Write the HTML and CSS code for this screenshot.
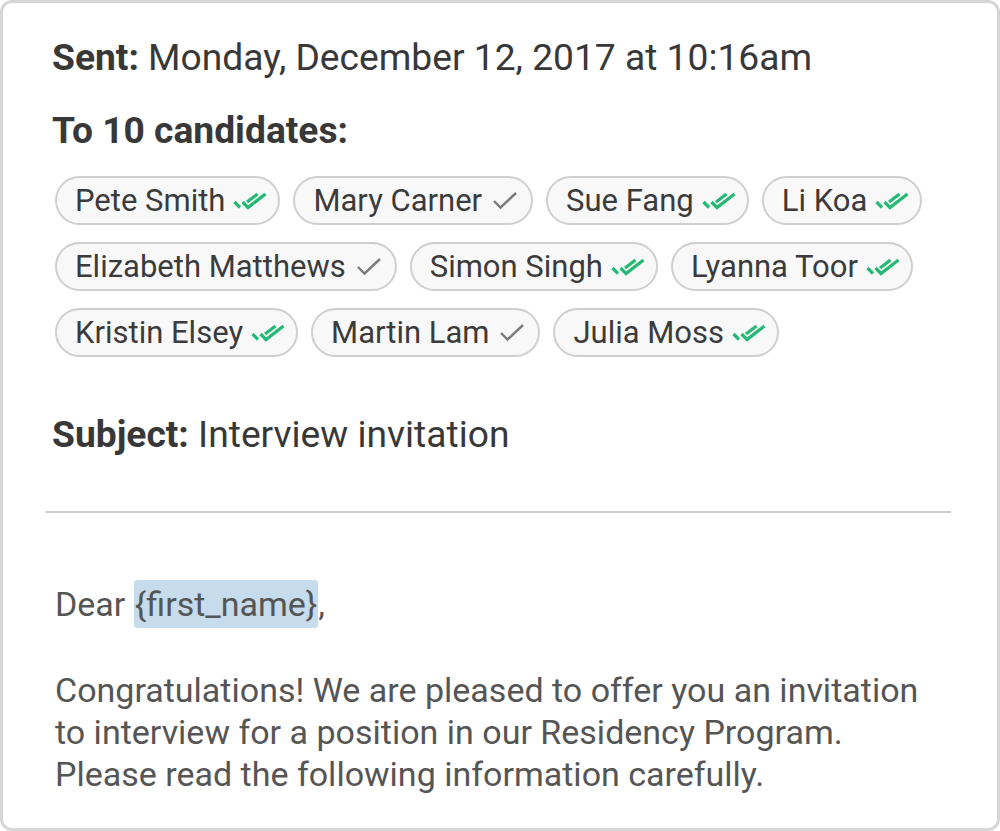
FILE: index.html
```html
<!DOCTYPE html>
<html lang="en">

<head>
    <meta charset="UTF-8">
    <meta name="viewport" content="width=device-width, initial-scale=1.0">
    <title>Interview invitation</title>
    <link rel="stylesheet" href="styles.css">
</head>

<body>

    <div class="card">
        <div class="header">
            <p class="sent"><b>Sent:</b> Monday, December 12, 2017 at 10:16am</p>

            <p class="to"><b>To 10 candidates:</b></p>

            <!-- danh sách người nhận -->
            <div class="chips">
                <span class="chip">Pete Smith <svg class="read" viewBox="0 0 34 18"><path d="M1.5 10l5.5 5.5M9.5 10l5.5 5.5L32.5 2M14 10.1L24.5 2"/></svg></span>
                <span class="chip">Mary Carner <svg class="sent-ok" viewBox="0 0 26 20"><path d="M2 10l6.5 6.5L24 2"/></svg></span>
                <span class="chip">Sue Fang <svg class="read" viewBox="0 0 34 18"><path d="M1.5 10l5.5 5.5M9.5 10l5.5 5.5L32.5 2M14 10.1L24.5 2"/></svg></span>
                <span class="chip">Li Koa <svg class="read" viewBox="0 0 34 18"><path d="M1.5 10l5.5 5.5M9.5 10l5.5 5.5L32.5 2M14 10.1L24.5 2"/></svg></span>
                <span class="chip">Elizabeth Matthews <svg class="sent-ok" viewBox="0 0 26 20"><path d="M2 10l6.5 6.5L24 2"/></svg></span>
                <span class="chip">Simon Singh <svg class="read" viewBox="0 0 34 18"><path d="M1.5 10l5.5 5.5M9.5 10l5.5 5.5L32.5 2M14 10.1L24.5 2"/></svg></span>
                <span class="chip">Lyanna Toor <svg class="read" viewBox="0 0 34 18"><path d="M1.5 10l5.5 5.5M9.5 10l5.5 5.5L32.5 2M14 10.1L24.5 2"/></svg></span>
                <span class="chip">Kristin Elsey <svg class="read" viewBox="0 0 34 18"><path d="M1.5 10l5.5 5.5M9.5 10l5.5 5.5L32.5 2M14 10.1L24.5 2"/></svg></span>
                <span class="chip">Martin Lam <svg class="sent-ok" viewBox="0 0 26 20"><path d="M2 10l6.5 6.5L24 2"/></svg></span>
                <span class="chip">Julia Moss <svg class="read" viewBox="0 0 34 18"><path d="M1.5 10l5.5 5.5M9.5 10l5.5 5.5L32.5 2M14 10.1L24.5 2"/></svg></span>
            </div>

            <p class="subject"><b>Subject:</b> Interview invitation</p>
        </div>

        <hr class="divider">

        <div class="message">
            <p>Dear <span class="field">{first_name}</span>,</p>
            <p class="second">Congratulations! We are pleased to offer you an invitation to interview for a position in our Residency Program. Please read the following information carefully.</p>
        </div>
    </div>

</body>

</html>
```

FILE: styles.css
```css
body {
    font-family: 'Roboto', 'Liberation Sans', sans-serif;
    margin: 0;
    background-color: #fff;
}

.card {
    width: 1000px;
    height: 831px;
    box-sizing: border-box;
    border: 3px solid #d6d6d6;
    border-radius: 12px;
    overflow: hidden;
    color: #383838;
}

.header {
    padding: 32px 40px 0 49px;
}

.header p {
    margin: 0;
}

.sent,
.to,
.subject {
    font-size: 37.2px;
    line-height: 44px;
}

.header .to {
    margin-top: 29px;
}

.chips {
    display: flex;
    flex-wrap: wrap;
    gap: 17px 13px;
    margin-top: 24px;
    padding-left: 3px;
    width: 900px;
}

.chip {
    display: inline-flex;
    align-items: center;
    height: 49px;
    box-sizing: border-box;
    padding: 0 11px 0 18px;
    border: 2px solid #cfcfcf;
    border-radius: 25px;
    background-color: #f8f8f8;
    font-size: 31px;
    color: #3b3b3b;
}

.chip svg {
    fill: none;
    margin-left: 8px;
}

.chip .read {
    width: 34px;
    height: 18px;
    stroke: #25b976;
    stroke-width: 3.2;
}

.chip .sent-ok {
    width: 26px;
    height: 20px;
    margin-left: 10px;
    margin-right: 2px;
    stroke: #7a7a7a;
    stroke-width: 2.4;
}

.header .subject {
    margin-top: 55px;
}

.divider {
    border: none;
    border-top: 2px solid #d0d0d0;
    margin: 55px 46px 0 42px;
}

.message {
    padding: 70px 40px 0 52px;
    color: #555;
    font-size: 34px;
    line-height: 42px;
}

.message p {
    margin: 0;
    width: 880px;
}

.message .second {
    margin-top: 44px;
}

.field {
    background-color: #c6dcec;
    border-radius: 3px;
    padding: 4px 1px;
}
```
